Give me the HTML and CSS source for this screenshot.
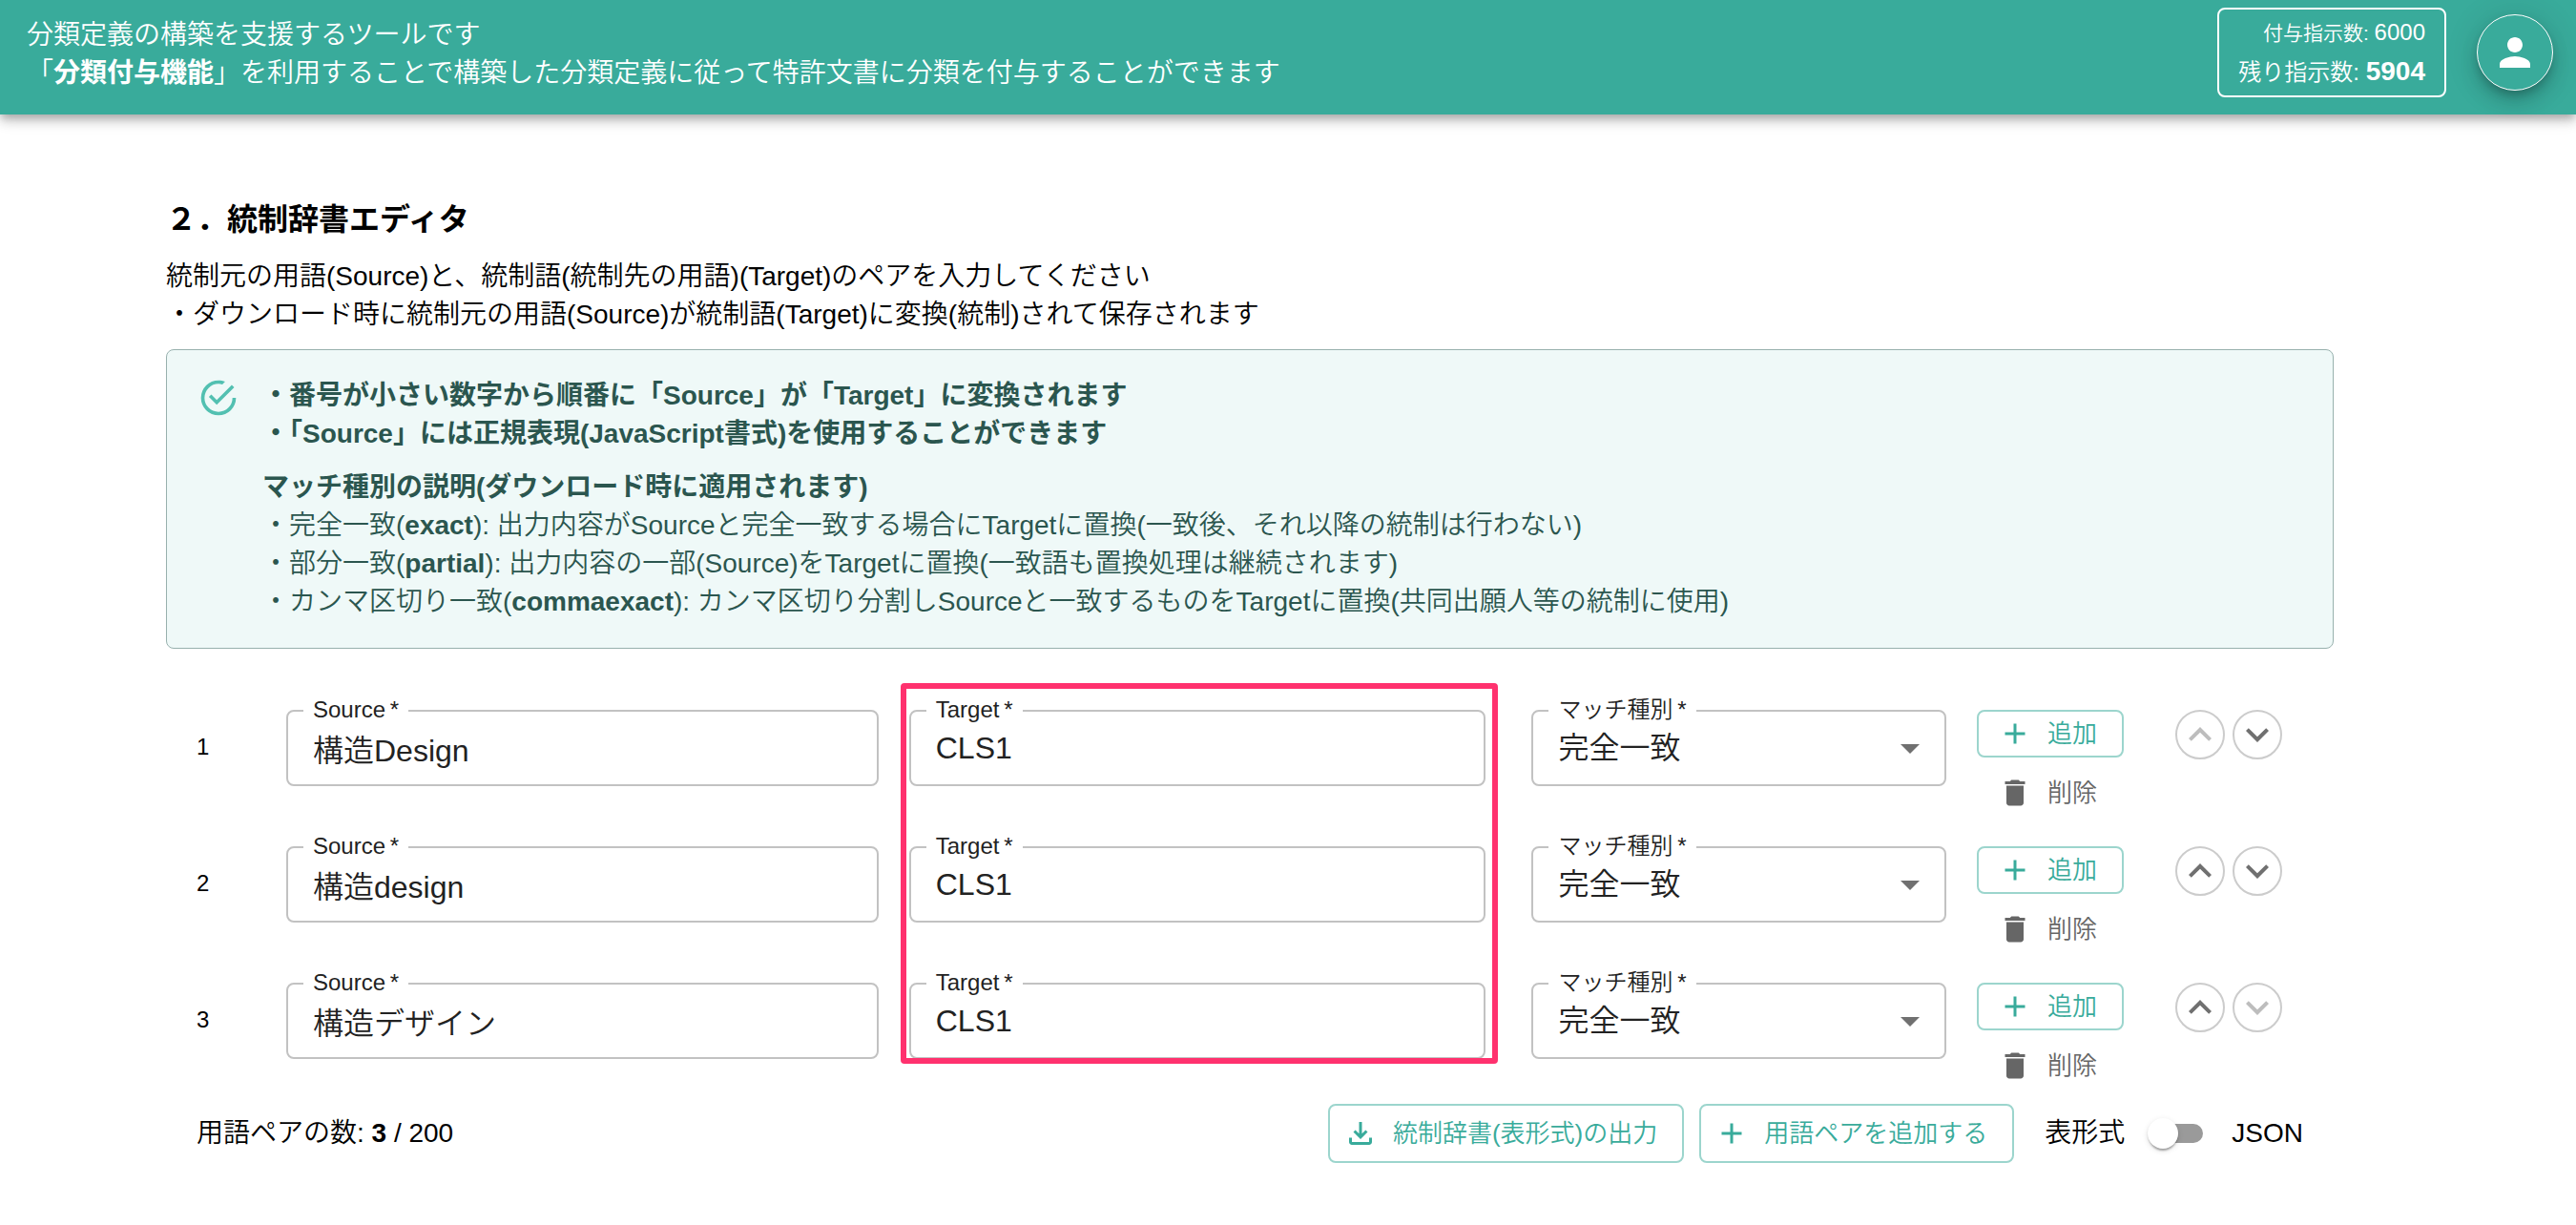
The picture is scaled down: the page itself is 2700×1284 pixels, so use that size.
FILE: index.html
```html
<!DOCTYPE html>
<html lang="ja">

<head>
    <meta charset="UTF-8">
    <title>統制辞書エディタ</title>
    <link rel="stylesheet" href="styles.css">
</head>

<body>
    <!-- アイコン定義 -->
    <svg class="icon-defs" aria-hidden="true">
        <symbol id="icon-person" viewBox="0 0 24 24"><path d="M12 12c2.21 0 4-1.79 4-4s-1.79-4-4-4-4 1.79-4 4 1.79 4 4 4zm0 2c-2.67 0-8 1.34-8 4v2h16v-2c0-2.66-5.33-4-8-4z"/></symbol>
        <symbol id="icon-check" viewBox="0 0 24 24"><path d="M20,12A8,8 0 0,1 12,20A8,8 0 0,1 4,12A8,8 0 0,1 12,4C12.76,4 13.5,4.11 14.2,4.31L15.77,2.74C14.61,2.26 13.34,2 12,2A10,10 0 0,0 2,12A10,10 0 0,0 12,22A10,10 0 0,0 22,12H20M7.91,10.08L6.5,11.5L11,16L21,6L19.59,4.58L11,13.17L7.91,10.08Z"/></symbol>
        <symbol id="icon-add" viewBox="0 0 24 24"><path d="M19 13h-6v6h-2v-6H5v-2h6V5h2v6h6v2z"/></symbol>
        <symbol id="icon-delete" viewBox="0 0 24 24"><path d="M6 19c0 1.1.9 2 2 2h8c1.1 0 2-.9 2-2V7H6v12zM19 4h-3.5l-1-1h-5l-1 1H5v2h14V4z"/></symbol>
        <symbol id="icon-up" viewBox="0 0 24 24"><path d="M7.41 15.41L12 10.83l4.59 4.58L18 14l-6-6-6 6z"/></symbol>
        <symbol id="icon-down" viewBox="0 0 24 24"><path d="M7.41 8.59L12 13.17l4.59-4.58L18 10l-6 6-6-6 1.41-1.41z"/></symbol>
        <symbol id="icon-drop" viewBox="0 0 24 24"><path d="M7 10l5 5 5-5z"/></symbol>
        <symbol id="icon-download" viewBox="0 0 24 24"><path d="M18 15v3H6v-3H4v3c0 1.1.9 2 2 2h12c1.1 0 2-.9 2-2v-3h-2zm-1-4l-1.41-1.41L13 12.17V4h-2v8.17L8.41 9.59 7 11l5 5 5-5z"/></symbol>
    </svg>

    <header class="header">
        <p class="header-text">分類定義の構築を支援するツールです<br>「<b>分類付与機能</b>」を利用することで構築した分類定義に従って特許文書に分類を付与することができます</p>
        <div class="header-right">
            <div class="quota">
                <div class="quota-total">付与指示数: <span>6000</span></div>
                <div class="quota-rest">残り指示数: <b>5904</b></div>
            </div>
            <button type="button" class="avatar" aria-label="アカウント"><svg class="icon-lg"><use href="#icon-person"/></svg></button>
        </div>
    </header>

    <main class="main">
        <h2 class="title">２．統制辞書エディタ</h2>
        <p class="lead">統制元の用語(Source)と、統制語(統制先の用語)(Target)のペアを入力してください<br>・ダウンロード時に統制元の用語(Source)が統制語(Target)に変換(統制)されて保存されます</p>

        <div class="notice">
            <svg class="notice-icon"><use href="#icon-check"/></svg>
            <div class="notice-body">
                <p><b>・番号が小さい数字から順番に「Source」が「Target」に変換されます<br>・「Source」には正規表現(JavaScript書式)を使用することができます</b></p>
                <p><b>マッチ種別の説明(ダウンロード時に適用されます)</b><br>・完全一致(<b>exact</b>): 出力内容がSourceと完全一致する場合にTargetに置換(一致後、それ以降の統制は行わない)<br>・部分一致(<b>partial</b>): 出力内容の一部(Source)をTargetに置換(一致語も置換処理は継続されます)<br>・カンマ区切り一致(<b>commaexact</b>): カンマ区切り分割しSourceと一致するものをTargetに置換(共同出願人等の統制に使用)</p>
            </div>
        </div>

        <form class="editor">
            <div class="pair-list">
                <div class="pair">
                    <div class="pair-no">1</div>
                    <div class="field">
                        <label for="source1">Source&thinsp;*</label>
                        <input type="text" id="source1" value="構造Design">
                    </div>
                    <div class="field field-target">
                        <label for="target1">Target&thinsp;*</label>
                        <input type="text" id="target1" value="CLS1">
                    </div>
                    <div class="field">
                        <label for="match1">マッチ種別&thinsp;*</label>
                        <select id="match1">
                            <option>完全一致</option>
                            <option>部分一致</option>
                            <option>カンマ区切り一致</option>
                        </select>
                        <svg class="field-arrow"><use href="#icon-drop"/></svg>
                    </div>
                    <div class="pair-actions">
                        <button type="button" class="btn"><svg class="icon"><use href="#icon-add"/></svg>追加</button>
                        <button type="button" class="btn btn-delete"><svg class="icon"><use href="#icon-delete"/></svg>削除</button>
                    </div>
                    <div class="pair-move">
                        <button type="button" class="btn-round" aria-label="上へ" disabled><svg class="icon-lg"><use href="#icon-up"/></svg></button>
                        <button type="button" class="btn-round" aria-label="下へ"><svg class="icon-lg"><use href="#icon-down"/></svg></button>
                    </div>
                </div>

                <div class="pair">
                    <div class="pair-no">2</div>
                    <div class="field">
                        <label for="source2">Source&thinsp;*</label>
                        <input type="text" id="source2" value="構造design">
                    </div>
                    <div class="field field-target">
                        <label for="target2">Target&thinsp;*</label>
                        <input type="text" id="target2" value="CLS1">
                    </div>
                    <div class="field">
                        <label for="match2">マッチ種別&thinsp;*</label>
                        <select id="match2">
                            <option>完全一致</option>
                            <option>部分一致</option>
                            <option>カンマ区切り一致</option>
                        </select>
                        <svg class="field-arrow"><use href="#icon-drop"/></svg>
                    </div>
                    <div class="pair-actions">
                        <button type="button" class="btn"><svg class="icon"><use href="#icon-add"/></svg>追加</button>
                        <button type="button" class="btn btn-delete"><svg class="icon"><use href="#icon-delete"/></svg>削除</button>
                    </div>
                    <div class="pair-move">
                        <button type="button" class="btn-round" aria-label="上へ"><svg class="icon-lg"><use href="#icon-up"/></svg></button>
                        <button type="button" class="btn-round" aria-label="下へ"><svg class="icon-lg"><use href="#icon-down"/></svg></button>
                    </div>
                </div>

                <div class="pair">
                    <div class="pair-no">3</div>
                    <div class="field">
                        <label for="source3">Source&thinsp;*</label>
                        <input type="text" id="source3" value="構造デザイン">
                    </div>
                    <div class="field field-target">
                        <label for="target3">Target&thinsp;*</label>
                        <input type="text" id="target3" value="CLS1">
                    </div>
                    <div class="field">
                        <label for="match3">マッチ種別&thinsp;*</label>
                        <select id="match3">
                            <option>完全一致</option>
                            <option>部分一致</option>
                            <option>カンマ区切り一致</option>
                        </select>
                        <svg class="field-arrow"><use href="#icon-drop"/></svg>
                    </div>
                    <div class="pair-actions">
                        <button type="button" class="btn"><svg class="icon"><use href="#icon-add"/></svg>追加</button>
                        <button type="button" class="btn btn-delete"><svg class="icon"><use href="#icon-delete"/></svg>削除</button>
                    </div>
                    <div class="pair-move">
                        <button type="button" class="btn-round" aria-label="上へ"><svg class="icon-lg"><use href="#icon-up"/></svg></button>
                        <button type="button" class="btn-round" aria-label="下へ" disabled><svg class="icon-lg"><use href="#icon-down"/></svg></button>
                    </div>
                </div>

                <!-- Target列の強調枠 -->
                <div class="highlight"></div>
            </div>

            <div class="toolbar">
                <div class="pair-count">用語ペアの数: <b>3</b> / 200</div>
                <button type="button" class="btn btn-tool"><svg class="icon"><use href="#icon-download"/></svg>統制辞書(表形式)の出力</button>
                <button type="button" class="btn btn-tool"><svg class="icon"><use href="#icon-add"/></svg>用語ペアを追加する</button>
                <label class="mode">表形式<input type="checkbox" class="switch" role="switch">JSON</label>
            </div>
        </form>
    </main>
</body>

</html>
```
FILE: styles.css
```css
* {
    box-sizing: border-box;
    margin: 0;
    padding: 0;
}

body {
    background: #fff;
    color: #000;
    font-family: "Liberation Sans", "Noto Sans CJK JP", sans-serif;
    font-size: 28px;
    font-weight: 350;
    line-height: 40px;
}

b {
    font-weight: 700;
}

button,
input,
select {
    font-family: inherit;
    font-weight: inherit;
    line-height: inherit;
    color: inherit;
}

/* アイコン */
.icon-defs {
    display: none;
}

svg {
    flex: none;
    fill: currentColor;
}

.icon {
    width: 36px;
    height: 36px;
}

.icon-lg {
    width: 48px;
    height: 48px;
}

/* ヘッダー */
.header {
    display: flex;
    justify-content: space-between;
    align-items: flex-start;
    height: 120px;
    padding: 8px 24px 0 28px;
    background: #39ab9b;
    color: #fff;
    box-shadow: 0 4px 8px -2px rgba(0, 0, 0, .2), 0 8px 10px rgba(0, 0, 0, .14), 0 2px 20px rgba(0, 0, 0, .12);
}

.header-text {
    padding-top: 9px;
}

.header-right {
    display: flex;
    align-items: center;
    gap: 32px;
}

.quota {
    padding: 4px 20px;
    border: 2px solid #fff;
    border-radius: 8px;
    text-align: right;
}

.quota-total {
    font-size: 21px;
}

.quota-total span {
    font-size: 24px;
}

.quota-rest {
    font-size: 24px;
}

.quota-rest b {
    font-size: 28px;
}

.avatar {
    display: flex;
    align-items: center;
    justify-content: center;
    width: 80px;
    height: 80px;
    border: 1px solid #fff;
    border-radius: 50%;
    background: #39ab9b;
    box-shadow: 0 6px 10px -2px rgba(0, 0, 0, .2), 0 12px 20px rgba(0, 0, 0, .14), 0 2px 36px rgba(0, 0, 0, .12);
}

/* 本文 */
.main {
    padding: 90px 254px 64px 174px;
}

.title {
    margin-bottom: 20px;
    font-size: 32px;
}

.lead {
    margin-bottom: 16px;
}

/* 説明ボックス */
.notice {
    display: flex;
    gap: 24px;
    padding: 28px 32px;
    border: 1px solid #98b1ae;
    border-radius: 8px;
    background: #eff9f8;
    color: #2b564f;
}

.notice-icon {
    width: 44px;
    height: 44px;
    color: #52c0b1;
}

.notice-body p + p {
    margin-top: 16px;
}

/* 用語ペア一覧 */
.editor {
    padding: 0 32px;
    margin-top: 64px;
}

.pair-list {
    position: relative;
    display: grid;
    grid-template-columns: 62px 10fr 10fr 7fr 154px 156px;
    gap: 31px 32px;
}

.pair {
    grid-column: 1 / -1;
    display: grid;
    grid-template-columns: subgrid;
    align-items: start;
}

.pair-no {
    font-size: 24px;
    line-height: 78px;
}

.field {
    position: relative;
    color: #222;
}

.field-target {
    margin-right: 16px;
}

.field label {
    position: absolute;
    top: -16px;
    left: 18px;
    padding: 0 10px;
    background: #fff;
    font-size: 24px;
    line-height: 32px;
}

.field input,
.field select {
    display: block;
    width: 100%;
    height: 80px;
    padding: 0 26px;
    border: 2px solid #c2c2c2;
    border-radius: 8px;
    background: transparent;
    font-size: 32px;
    appearance: none;
}

.field-arrow {
    position: absolute;
    top: 16px;
    right: 14px;
    width: 48px;
    height: 48px;
    color: #707070;
    pointer-events: none;
}

.highlight {
    position: absolute;
    grid-column: 3 / 4;
    top: -28px;
    right: 3px;
    bottom: 27px;
    left: -9px;
    border: 6px solid #ff316e;
    border-radius: 4px;
    pointer-events: none;
}

/* ボタン */
.btn {
    display: flex;
    align-items: center;
    gap: 16px;
    height: 50px;
    padding: 0 20px;
    border: 2px solid #9cd5cd;
    border-radius: 8px;
    background: transparent;
    color: #39ab9b;
    font-size: 26px;
}

.btn-delete {
    border-color: transparent;
    color: #666;
}

.btn-tool {
    height: 62px;
    padding: 0 26px 0 14px;
}

.pair-actions {
    display: flex;
    flex-direction: column;
    gap: 12px;
}

.pair-move {
    display: flex;
    justify-content: center;
    gap: 8px;
}

.btn-round {
    display: flex;
    align-items: center;
    justify-content: center;
    width: 52px;
    height: 52px;
    border: 2px solid #ccc;
    border-radius: 50%;
    background: transparent;
    color: #707070;
}

.btn-round:disabled {
    color: #bdbdbd;
}

/* 下部ツールバー */
.toolbar {
    display: flex;
    align-items: center;
    gap: 16px;
    margin-top: 15px;
}

.pair-count {
    margin-right: auto;
}

.mode {
    display: flex;
    align-items: center;
    gap: 16px;
    margin-left: 16px;
}

/* スイッチ */
.switch {
    position: relative;
    display: flex;
    align-items: center;
    width: 80px;
    height: 48px;
    padding: 0 14px;
    appearance: none;
}

.switch::before {
    content: "";
    flex: 1;
    height: 20px;
    border-radius: 10px;
    background: #9a9a9a;
}

/* つまみ */
.switch::after {
    content: "";
    position: absolute;
    top: 8px;
    left: 8px;
    width: 32px;
    height: 32px;
    border-radius: 50%;
    background: #fff;
    box-shadow: 0 4px 2px -2px rgba(0, 0, 0, .2), 0 2px 2px rgba(0, 0, 0, .14), 0 2px 6px rgba(0, 0, 0, .12);
}

.switch:checked::after {
    left: 40px;
}
```
